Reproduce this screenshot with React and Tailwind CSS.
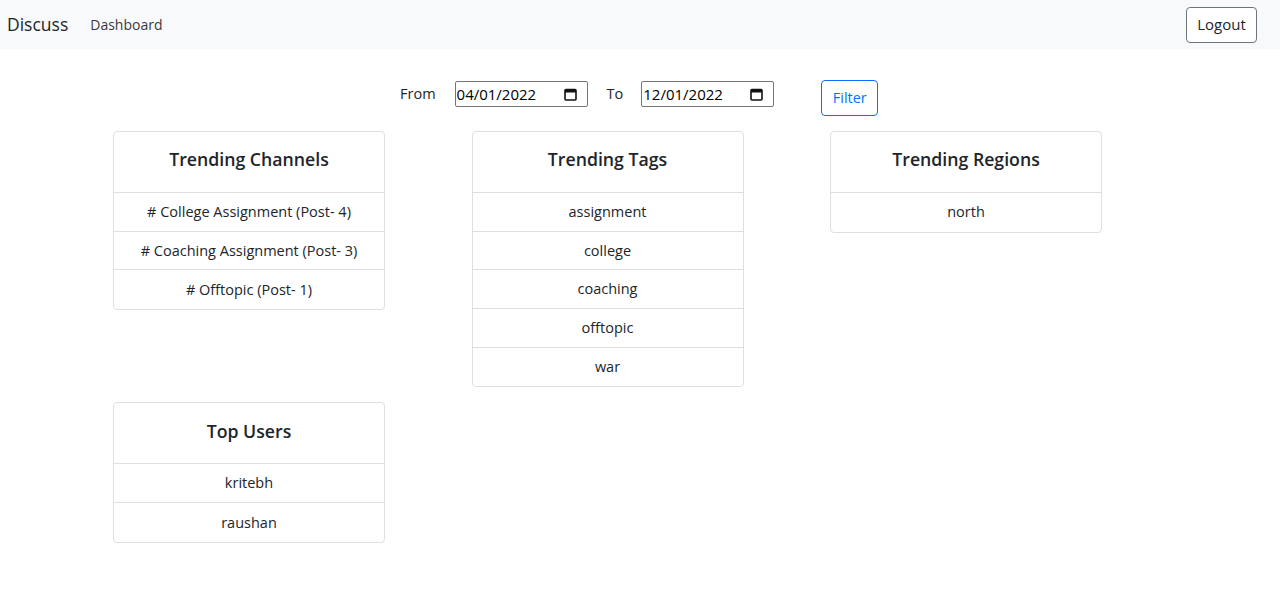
import React from "react";

function CalIcon() {
  return (
    <svg width="13" height="13" viewBox="0 0 13 13" className="shrink-0">
      <rect x="1" y="1.5" width="11" height="10.5" rx="1" fill="none" stroke="#111" strokeWidth="1.6" />
      <rect x="1" y="1.5" width="11" height="3" fill="#111" />
    </svg>
  );
}

function DateBox({ value }) {
  return (
    <div className="flex items-center justify-between w-[133px] h-[26px] border border-[#767676] rounded-[2px] pl-[1px] pr-[10px] text-[15px] text-black bg-white">
      <span>{value}</span>
      <CalIcon />
    </div>
  );
}

function Card({ title, items }) {
  return (
    <div className="w-[272px] border border-[#dfdfdf] rounded-[4px] bg-white">
      <div className="h-[61px] flex items-center justify-center pb-[5px] border-b border-[#dfdfdf] text-[17.7px] font-semibold text-[#212529]">
        {title}
      </div>
      {items.map((it, i) => (
        <div
          key={i}
          className={`h-[38.7px] flex items-center justify-center text-[14.5px] text-[#212529] ${i < items.length - 1 ? "border-b border-[#dfdfdf]" : ""}`}
        >
          {it}
        </div>
      ))}
    </div>
  );
}

export default function App() {
  return (
    <div className="min-h-[590px] bg-white" style={{ fontFamily: '"Open Sans", "Noto Sans", sans-serif' }}>
      <nav className="h-[49px] bg-[#f8f9fa] flex items-center justify-between pl-[7px] pr-[23px]">
        <div className="flex items-center">
          <span className="text-[17.5px] text-[#212529]">Discuss</span>
          <span className="ml-[22px] text-[14px] text-[#3a3a3a]">Dashboard</span>
        </div>
        <button className="h-[36px] w-[71px] border border-[#6c757d] rounded-[4px] text-[15px] text-[#212529] bg-white">
          Logout
        </button>
      </nav>

      <div className="flex items-start justify-start pl-[400px] pt-[32px]">
        <div className="flex items-center h-[26px]">
          <span className="text-[14.5px] text-[#212529]">From</span>
          <div className="ml-[19px]"><DateBox value="04/01/2022" /></div>
          <span className="ml-[19px] text-[14.5px] text-[#212529]">To</span>
          <div className="ml-[18px]"><DateBox value="12/01/2022" /></div>
        </div>
        <button className="ml-[47px] h-[36px] w-[57px] -mt-[1px] border border-[#0d6efd] rounded-[4px] text-[14.5px] text-[#0d6efd] bg-white">
          Filter
        </button>
      </div>

      <div className="grid grid-cols-[272px_272px_272px] gap-x-[86.5px] gap-y-[15px] items-start pl-[113px] mt-[15px]">
        <Card
          title="Trending Channels"
          items={["# College Assignment (Post- 4)", "# Coaching Assignment (Post- 3)", "# Offtopic (Post- 1)"]}
        />
        <Card title="Trending Tags" items={["assignment", "college", "coaching", "offtopic", "war"]} />
        <Card title="Trending Regions" items={["north"]} />
        <Card title="Top Users" items={["kritebh", "raushan"]} />
      </div>
    </div>
  );
}
